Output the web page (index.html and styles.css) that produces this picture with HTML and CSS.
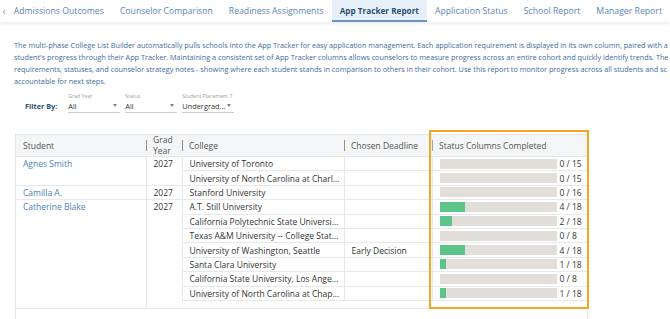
FILE: index.html
```html
<!DOCTYPE html>
<html lang="en">
<head>
    <meta charset="UTF-8">
    <meta name="viewport" content="width=device-width, initial-scale=1.0">
    <title>App Tracker Report</title>
    <link rel="stylesheet" href="styles.css">
</head>
<body>

    <!-- Report tabs -->
    <nav class="tabs">
        <span class="tabs-prev">&lsaquo;</span>
        <a class="tab">Admissions Outcomes</a>
        <a class="tab">Counselor Comparison</a>
        <a class="tab">Readiness Assignments</a>
        <a class="tab active">App Tracker Report</a>
        <a class="tab">Application Status</a>
        <a class="tab">School Report</a>
        <a class="tab">Manager Report</a>
    </nav>

    <main class="page">
        <p class="intro">
            The multi-phase College List Builder automatically pulls schools into the App Tracker for easy application management. Each application requirement is displayed in its own column, paired with a<br>
            student's progress through their App Tracker. Maintaining a consistent set of App Tracker columns allows counselors to measure progress across an entire cohort and quickly identify trends. The<br>
            requirements, statuses, and counselor strategy notes - showing where each student stands in comparison to others in their cohort. Use this report to monitor progress across all students and sc<br>
            accountable for next steps.
        </p>

        <div class="filters">
            <span class="filters-title">Filter By:</span>
            <div class="filter">
                <span class="filter-label">Grad Year</span>
                <span class="filter-select">All<span class="caret"></span></span>
            </div>
            <div class="filter">
                <span class="filter-label">Status</span>
                <span class="filter-select">All<span class="caret"></span></span>
            </div>
            <div class="filter">
                <span class="filter-label">Student Placement T</span>
                <span class="filter-select">Undergrad...<span class="caret"></span></span>
            </div>
        </div>

        <div class="report">
            <table class="tracker">
                <colgroup>
                    <col class="col-student">
                    <col class="col-year">
                    <col class="col-college">
                    <col class="col-deadline">
                    <col class="col-status">
                </colgroup>
                <thead>
                    <tr>
                        <th>Student</th>
                        <th class="two-line">Grad<br>Year</th>
                        <th>College</th>
                        <th>Chosen Deadline</th>
                        <th class="th-status">Status Columns Completed</th>
                    </tr>
                </thead>
                <tbody>
                    <tr>
                        <td class="student" rowspan="2"><a>Agnes Smith</a></td>
                        <td class="year" rowspan="2">2027</td>
                        <td class="college">University of Toronto</td>
                        <td></td>
                        <td><div class="progress"><div class="progress-bar"><div class="progress-fill" style="width:0%"></div></div><span class="progress-label">0 / 15</span></div></td>
                    </tr>
                    <tr>
                        <td class="college">University of North Carolina at Charlotte</td>
                        <td></td>
                        <td><div class="progress"><div class="progress-bar"><div class="progress-fill" style="width:0%"></div></div><span class="progress-label">0 / 15</span></div></td>
                    </tr>
                    <tr>
                        <td class="student"><a>Camilla A.</a></td>
                        <td class="year">2027</td>
                        <td class="college">Stanford University</td>
                        <td></td>
                        <td><div class="progress"><div class="progress-bar"><div class="progress-fill" style="width:0%"></div></div><span class="progress-label">0 / 16</span></div></td>
                    </tr>
                    <tr>
                        <td class="student" rowspan="8"><a>Catherine Blake</a></td>
                        <td class="year" rowspan="8">2027</td>
                        <td class="college">A.T. Still University</td>
                        <td></td>
                        <td><div class="progress"><div class="progress-bar"><div class="progress-fill" style="width:22.2%"></div></div><span class="progress-label">4 / 18</span></div></td>
                    </tr>
                    <tr>
                        <td class="college">California Polytechnic State University, San Luis Obispo</td>
                        <td></td>
                        <td><div class="progress"><div class="progress-bar"><div class="progress-fill" style="width:11.1%"></div></div><span class="progress-label">2 / 18</span></div></td>
                    </tr>
                    <tr>
                        <td class="college">Texas A&amp;M University -- College Station</td>
                        <td></td>
                        <td><div class="progress"><div class="progress-bar"><div class="progress-fill" style="width:0%"></div></div><span class="progress-label">0 / 8</span></div></td>
                    </tr>
                    <tr>
                        <td class="college">University of Washington, Seattle</td>
                        <td>Early Decision</td>
                        <td><div class="progress"><div class="progress-bar"><div class="progress-fill" style="width:22.2%"></div></div><span class="progress-label">4 / 18</span></div></td>
                    </tr>
                    <tr>
                        <td class="college">Santa Clara University</td>
                        <td></td>
                        <td><div class="progress"><div class="progress-bar"><div class="progress-fill" style="width:5.6%"></div></div><span class="progress-label">1 / 18</span></div></td>
                    </tr>
                    <tr>
                        <td class="college">California State University, Los Angeles</td>
                        <td></td>
                        <td><div class="progress"><div class="progress-bar"><div class="progress-fill" style="width:0%"></div></div><span class="progress-label">0 / 8</span></div></td>
                    </tr>
                    <tr>
                        <td class="college">University of North Carolina at Chapel Hill</td>
                        <td></td>
                        <td><div class="progress"><div class="progress-bar"><div class="progress-fill" style="width:5.6%"></div></div><span class="progress-label">1 / 18</span></div></td>
                    </tr>
                    <tr class="spacer">
                        <td></td>
                        <td></td>
                        <td></td>
                    </tr>
                </tbody>
            </table>
            <!-- highlight around the status column -->
            <div class="highlight"></div>
        </div>
    </main>

</body>
</html>
```

FILE: styles.css
```css
body {
    margin: 0;
    background-color: white;
    font-family: 'Open Sans', 'Liberation Sans', sans-serif;
    overflow: hidden;
    height: 100vh;
}

/* Tabs */
.tabs {
    display: flex;
    align-items: stretch;
    height: 22px;
    background-color: white;
    box-shadow: 0 2px 4px rgba(0, 0, 0, 0.08);
    font-size: 8.7px;
    white-space: nowrap;
}
.tabs-prev {
    width: 20px;
    padding-left: 2px;
    box-sizing: border-box;
    display: flex;
    align-items: center;
    justify-content: center;
    color: #8a8f95;
    font-size: 10px;
    padding-bottom: 1px;
}
.tab {
    display: flex;
    align-items: center;
    padding: 0 8px 1px;
    color: #5b86b3;
    box-sizing: border-box;
}
.tab.active {
    background-color: #e7f0f8;
    color: #2c5075;
    font-size: 8.2px;
    font-weight: 700;
    border-bottom: 2px solid #6b93bd;
    padding-bottom: 0;
}

/* Page */
.page {
    padding-left: 14px;
}
.intro {
    margin: 17px 0 0;
    width: 900px;
    font-size: 7.28px;
    line-height: 12px;
    color: #3f6c9c;
    white-space: nowrap;
}

/* Filters */
.filters {
    display: flex;
    align-items: flex-end;
    gap: 5px;
    margin-top: 5px;
    padding-left: 11px;
}
.filters-title {
    font-size: 7.3px;
    font-weight: 700;
    color: #2c5075;
    margin-right: 6px;
    line-height: 12px;
    padding-bottom: 1px;
}
.filter {
    display: flex;
    flex-direction: column;
}
.filter-label {
    font-size: 5.2px;
    line-height: 8px;
    color: #9aa0a6;
    white-space: nowrap;
}
.filter-select {
    display: flex;
    align-items: center;
    justify-content: space-between;
    width: 52px;
    height: 13px;
    box-sizing: border-box;
    padding: 0 3px 1px 0;
    border-bottom: 1px solid #c9cdd2;
    font-size: 7.4px;
    color: #333;
}
.caret {
    width: 0;
    height: 0;
    border-left: 2.5px solid transparent;
    border-right: 2.5px solid transparent;
    border-top: 3px solid #7a7f85;
}

/* Report table */
.report {
    position: relative;
    margin-top: 21px;
    margin-left: 1px;
    width: 573px;
    height: 260px;
    border: 1px solid #e3e6e9;
    box-sizing: border-box;
}
.tracker {
    border-collapse: collapse;
    table-layout: fixed;
    width: 571px;
    font-size: 8.5px;
    color: #333;
}
.col-student { width: 130px; }
.col-year { width: 36px; }
.col-college { width: 162px; }
.col-deadline { width: 88px; }
.col-status { width: 155px; }

.tracker th {
    position: relative;
    height: 20px;
    padding: 0 7px;
    background-color: #f4f5f6;
    border-bottom: 1px solid #e3e6e9;
    text-align: left;
    font-weight: 400;
    color: #555;
}
.tracker th.two-line {
    line-height: 10.5px;
}
.tracker th + th::before {
    content: '';
    position: absolute;
    left: 0;
    top: 5px;
    bottom: 5px;
    width: 1px;
    background-color: #8d9196;
}
.tracker th.th-status::before {
    background-color: #8fa8c2;
}
.tracker td {
    height: 13.4px;
    padding: 0 7px;
    border-bottom: 1px solid #e6e9ec;
    border-left: 1px solid #e6e9ec;
    white-space: nowrap;
    overflow: hidden;
    text-overflow: ellipsis;
    line-height: 13px;
}
.tracker td.college {
    padding-right: 4px;
}
.tracker td.student {
    border-left: none;
    vertical-align: top;
    border-right: 1px solid #e6e9ec;
}
.tracker td.year {
    vertical-align: top;
    border-left: none;
}
.tracker td.student a {
    color: #4b7fb5;
}
.tracker .spacer td {
    height: 7px;
    border-left: none;
}

/* Status progress */
.progress {
    display: flex;
    align-items: center;
    gap: 3px;
}
.progress-bar {
    width: 117px;
    height: 10px;
    background-color: #e2dfdb;
    flex-shrink: 0;
}
.progress-fill {
    height: 100%;
    background-color: #5dc48a;
}
.progress-label {
    font-size: 8.5px;
    color: #333;
}

.highlight {
    position: absolute;
    left: 413px;
    top: -5px;
    width: 160px;
    height: 179px;
    border: 2px solid #f6a623;
    box-sizing: border-box;
    pointer-events: none;
}
```
